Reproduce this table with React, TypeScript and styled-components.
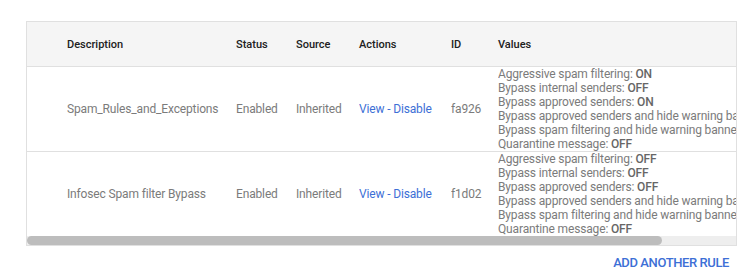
import React from "react";
import styled, { createGlobalStyle } from "styled-components";

const Global = createGlobalStyle`
  html, body { margin: 0; padding: 0; background: #ffffff; }
  body { font-family: Roboto, "Noto Sans", Arial, sans-serif; -webkit-font-smoothing: antialiased; }
`;

const Page = styled.div`
  width: 754px;
  height: 274px;
  box-sizing: border-box;
  padding: 21px 17px 0 26px;
  display: flex;
  flex-direction: column;
`;

const Frame = styled.div`
  border: 1px solid #e0e0e0;
  overflow: hidden;
  display: flex;
  flex-direction: column;
`;

const Table = styled.table`
  border-collapse: collapse;
  table-layout: fixed;
  width: 789px;
`;

const HeadCell = styled.th<{ $w: number }>`
  width: ${(p) => p.$w}px;
  height: 44px;
  padding: 0;
  text-align: left;
  font-size: 11px;
  font-weight: 500;
  color: #212121;
  background: #f5f5f5;
  border-bottom: 1px solid #e0e0e0;
  white-space: nowrap;
`;

const Row = styled.tr<{ $last?: boolean }>`
  border-bottom: ${(p) => (p.$last ? "none" : "1px solid #e0e0e0")};
`;

const Cell = styled.td`
  padding: 0;
  vertical-align: middle;
  font-size: 12px;
  letter-spacing: -0.15px;
  color: #7b7b7b;
  white-space: nowrap;
  overflow: hidden;
`;

const LinkCell = styled(Cell)`
  color: #3d6fd6;
`;

const ValuesCell = styled(Cell)`
  line-height: 14px;
`;

const ValueLine = styled.div`
  white-space: nowrap;
`;

const Flag = styled.span`
  font-weight: 500;
  color: #666666;
`;

const ScrollTrack = styled.div`
  height: 9px;
  background: #eeeeee;
  display: flex;
`;

const ScrollThumb = styled.div<{ $w: number }>`
  width: ${(p) => p.$w}px;
  height: 9px;
  background: #bdbdbd;
  border-radius: 5px;
`;

const Actions = styled.div`
  display: flex;
  justify-content: flex-end;
  padding: 9px 8px 0 0;
`;

const TextButton = styled.button`
  border: none;
  background: none;
  padding: 0;
  font-family: Roboto, Arial, sans-serif;
  font-size: 13px;
  font-weight: 500;
  letter-spacing: -0.4px;
  text-transform: uppercase;
  color: #3d6fd6;
  cursor: pointer;
`;

type Rule = {
  description: string;
  id: string;
  values: [string, string][];
};

const rules: Rule[] = [
  {
    description: "Spam_Rules_and_Exceptions",
    id: "fa926",
    values: [
      ["Aggressive spam filtering", "ON"],
      ["Bypass internal senders", "OFF"],
      ["Bypass approved senders", "ON"],
      ["Bypass approved senders and hide warning banner", "OFF"],
      ["Bypass spam filtering and hide warning banner", "OFF"],
      ["Quarantine message", "OFF"],
    ],
  },
  {
    description: "Infosec Spam filter Bypass",
    id: "f1d02",
    values: [
      ["Aggressive spam filtering", "OFF"],
      ["Bypass internal senders", "OFF"],
      ["Bypass approved senders", "OFF"],
      ["Bypass approved senders and hide warning banner", "OFF"],
      ["Bypass spam filtering and hide warning banner", "OFF"],
      ["Quarantine message", "OFF"],
    ],
  },
];

const columns: [string, number][] = [
  ["", 40],
  ["Description", 169],
  ["Status", 60],
  ["Source", 63],
  ["Actions", 92],
  ["ID", 47],
  ["Values", 318],
];

export default function App() {
  return (
    <Page>
      <Global />
      <Frame>
        <Table>
          <thead>
            <tr>
              {columns.map(([label, w], i) => (
                <HeadCell key={i} $w={w}>
                  {label}
                </HeadCell>
              ))}
            </tr>
          </thead>
          <tbody>
            {rules.map((r, i) => (
              <Row key={r.id} $last={i === rules.length - 1}>
                <Cell />
                <Cell>{r.description}</Cell>
                <Cell>Enabled</Cell>
                <Cell>Inherited</Cell>
                <LinkCell>View - Disable</LinkCell>
                <Cell>{r.id}</Cell>
                <ValuesCell>
                  {r.values.map(([k, v]) => (
                    <ValueLine key={k}>
                      {k}: <Flag>{v}</Flag>
                    </ValueLine>
                  ))}
                </ValuesCell>
              </Row>
            ))}
          </tbody>
        </Table>
        <ScrollTrack>
          <ScrollThumb $w={635} />
        </ScrollTrack>
      </Frame>
      <Actions>
        <TextButton>Add another rule</TextButton>
      </Actions>
    </Page>
  );
}
